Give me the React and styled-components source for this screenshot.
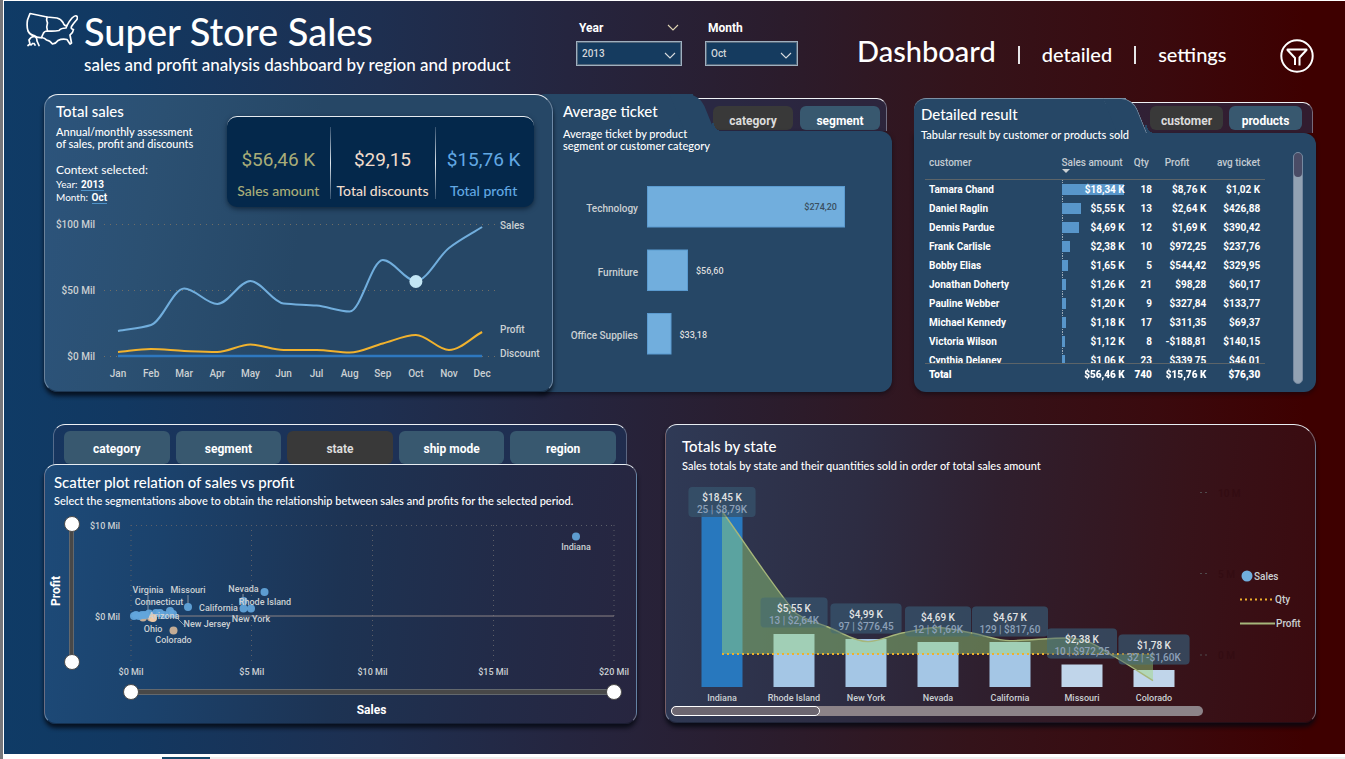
import React, { useState } from "react";
import styled, { createGlobalStyle, css } from "styled-components";

const human = `Lato, "Open Sans", sans-serif`;
const din = `Roboto, "Noto Sans", sans-serif`;
const panel = "#264766";
const sky = "#71aedd";

const GlobalStyle = createGlobalStyle`
  *, *::before, *::after { box-sizing: border-box; }
  body { margin: 0; font-family: ${din}; color: #fff; background: #fff; }
  h1, h2, p { margin: 0; font-weight: 500; }
  button { font: inherit; color: inherit; border: 0; padding: 0; cursor: pointer; }
  svg { display: block; }
`;

const Page = styled.div`
  min-height: 100vh;
  display: flex;
  flex-direction: column;
  border-left: 3px solid #77777b;
`;

const Report = styled.main`
  flex: 1;
  border-top: 1px solid #fff;
  border-left: 1px solid #fff;
  background: linear-gradient(90deg, #0f3b66 0%, #123861 9%, #1e2f50 28%, #25253f 42%, #2b1c2c 58%, #34131a 72%, #3a0a0e 86%, #3e0000 97%);
`;

const Header = styled.header`
  display: grid;
  grid-template-columns: 550fr 281fr 457fr;
  height: 93px;
  padding: 0 31px 0 22px;
`;

const Brand = styled.div`
  display: flex;
  gap: 6px;
  padding-top: 9px;
`;

const BrandText = styled.div`
  font-family: ${human};
`;

const AppTitle = styled.h1`
  font-size: 38px;
  line-height: 42px;
  white-space: nowrap;
`;

const AppSubtitle = styled.p`
  font-size: 17px;
  line-height: 26px;
  white-space: nowrap;
`;

const Filters = styled.div`
  display: flex;
  gap: 23px;
  padding-top: 18px;
`;

const FilterField = styled.div`
  position: relative;
  width: ${(p) => p.$width}px;
`;

const FilterLabel = styled.label`
  display: flex;
  justify-content: space-between;
  align-items: center;
  height: 18px;
  padding: 0 3px;
  margin-bottom: 4px;
  font-size: 12px;
  font-weight: 700;
`;

const FilterSelect = styled.select`
  appearance: none;
  display: block;
  width: 100%;
  height: 25px;
  padding: 0 5px;
  border: 1px solid #9fb0bf;
  outline: 1px solid #53677b;
  outline-offset: -2px;
  border-radius: 0;
  background: #153b5f;
  color: #d3d6d9;
  font-family: ${din};
  font-size: 10px;
  font-weight: 500;
`;

const SelectChevron = styled.svg`
  position: absolute;
  right: 6px;
  top: 33px;
  pointer-events: none;
`;

const Nav = styled.nav`
  display: flex;
  align-items: baseline;
  padding-top: 29px;
  font-family: ${human};
  font-weight: 500;
`;

const NavLink = styled.a`
  color: #fff;
  text-decoration: none;
  line-height: 42px;
  font-size: ${(p) => (p.$active ? 29 : 20)}px;
`;

const NavBar = styled.span`
  align-self: flex-start;
  width: 2px;
  height: 18px;
  margin: 16px 22px 0;
  background: #e6e6e8;
`;

const FilterButton = styled.button`
  align-self: flex-start;
  margin: 9px 0 0 auto;
  width: 34px;
  height: 34px;
  background: none;
`;

const Content = styled.div`
  padding: 0 29px 30px 40px;
`;

const Row = styled.section`
  display: grid;
  grid-template-columns: ${(p) => p.$cols};
  column-gap: ${(p) => p.$gap}px;
  align-items: start;
`;

const TopRow = styled(Row)`
  margin-bottom: 32px;
`;

const Pair = styled.div`
  display: grid;
  grid-template-columns: 509fr 339fr;
  min-height: 298px;
`;

const Card = styled.article`
  min-width: 0;
  border: 1px solid rgba(210, 220, 235, 0.4);
  border-top-color: #e8edf2;
  border-bottom-color: rgba(10, 16, 28, 0.4);
  border-radius: ${(p) => p.$radius || "12px"};
  background: ${(p) => p.$bg};
  box-shadow: 0 4px 4px rgba(4, 8, 16, 0.8);
`;

const SalesCard = styled(Card)`
  position: relative;
  z-index: 2;
`;

const CardTitle = styled.h2`
  font-family: ${human};
  font-size: 15px;
  line-height: 20px;
  white-space: nowrap;
`;

const CardText = styled.p`
  font-family: ${human};
  font-size: 11px;
  line-height: 12px;
  white-space: nowrap;
  margin-top: ${(p) => p.$top || 0}px;
`;

const SalesHead = styled.div`
  display: flex;
  justify-content: space-between;
  height: 115px;
  padding: 6px 18px 0 11px;
`;

const Intro = styled.div`
  display: flex;
  flex-direction: column;
`;

const Context = styled.div`
  margin-top: 12px;
  font-family: ${human};
  font-size: 12px;
  line-height: 16px;
`;

const ContextLine = styled.div`
  font-size: 10px;
  line-height: 12px;
  b {
    font-family: ${din};
    font-weight: 700;
    border-bottom: 1px solid #4f93c9;
    margin-left: 1px;
  }
`;

const Kpis = styled.div`
  display: grid;
  grid-template-columns: 103fr 106fr 97fr;
  width: 307px;
  height: 91px;
  margin-top: 15px;
  padding-right: 2px;
  border-top: 1px solid #e6ebf0;
  border-radius: 10px;
  background: #04284b;
  box-shadow: 0 2px 5px rgba(4, 16, 32, 0.6);
`;

const Kpi = styled.div`
  position: relative;
  display: flex;
  flex-direction: column;
  align-items: center;
  padding-top: 31px;
  color: ${(p) => p.$color};
  &:not(:first-child)::before {
    content: "";
    position: absolute;
    left: 0;
    top: 10px;
    height: 72px;
    width: 1px;
    background: linear-gradient(#33506e, #dfe6ec, #33506e);
  }
`;

const KpiValue = styled.strong`
  font-weight: 400;
  font-size: 19px;
  line-height: 24px;
`;

const KpiLabel = styled.span`
  font-family: ${human};
  font-weight: 500;
  font-size: 14px;
  line-height: 18px;
  margin-top: 10px;
  white-space: nowrap;
`;

const Chart = styled.svg`
  width: 100%;
  height: auto;
  font-family: ${din};
  font-size: 10px;
  font-weight: 500;
  fill: #cbd0d3;
`;

const Folder = styled.article`
  display: flex;
  flex-direction: column;
  min-width: 0;
  margin-top: ${(p) => p.$drop || 0}px;
  margin-left: ${(p) => p.$tuck || 0}px;
`;

const FolderHead = styled.div`
  display: flex;
  height: ${(p) => p.$height}px;
`;

const FolderTab = styled.div`
  position: relative;
  z-index: 1;
  flex: none;
  width: ${(p) => p.$width}px;
  height: 100%;
  padding: ${(p) => p.$pad};
  border-radius: 12px 0 0 0;
  background: ${panel};
  ${(p) => p.$line && css`border-top: 1px solid #7c90a4;`}
  &::after {
    content: "";
    position: absolute;
    z-index: -1;
    top: ${(p) => (p.$line ? -1 : 0)}px;
    right: -14px;
    width: 30px;
    height: 100%;
    border-radius: 0 12px 0 0;
    background: ${panel};
    ${(p) => p.$line && css`border-top: 1px solid #7c90a4; border-right: 1px solid #7c90a4; height: calc(100% + 1px);`}
    transform: skewX(22deg);
  }
  &::before {
    content: "";
    position: absolute;
    z-index: -1;
    right: -29px;
    bottom: 0;
    width: 10px;
    height: 8px;
    background: radial-gradient(circle at 10px 0, transparent 8px, ${panel} 8px);
  }
`;

const TabStrip = styled.div`
  flex: 1;
  display: flex;
  justify-content: flex-end;
  gap: ${(p) => p.$gap}px;
  margin: 4px ${(p) => p.$inset}px 0 0;
  padding: ${(p) => p.$pad};
  border: 1px solid rgba(220, 225, 235, 0.4);
  border-top-color: #f0f2f5;
  border-left: 0;
  border-bottom: 0;
  border-radius: 0 10px 0 0;
  background: rgba(44, 46, 78, 0.6);
`;

const TabButton = styled.button`
  && {
    height: ${(p) => p.$height || 24}px;
    width: ${(p) => p.$width || "auto"};
    border-radius: 6px;
    background: ${(p) => (p.$active ? "#393939" : "#38586f")};
    color: ${(p) => (p.$active ? "#dcdcdc" : "#fff")};
    font-size: 12px;
    font-weight: 700;
    padding-top: ${(p) => (p.$height ? 2 : 5)}px;
  }
`;

const FolderBody = styled.div`
  flex: 1;
  padding: ${(p) => p.$pad || 0};
  border-radius: 0 12px 12px 12px;
  background: ${panel};
  box-shadow: 0 2px 4px rgba(4, 8, 16, 0.5);
`;

const TableArea = styled.div`
  display: flex;
  justify-content: space-between;
  height: 232px;
`;

const TableClip = styled.div`
  width: 90%;
  overflow: hidden;
`;

const DataTable = styled.table`
  width: 100%;
  table-layout: fixed;
  border-collapse: separate;
  border-spacing: 0;
  font-size: 10px;
  font-weight: 700;
  th, td { padding: 0 1px 0 4px; text-align: right; white-space: nowrap; }
  td { height: 19px; position: relative; }
  th:first-child, td:first-child { text-align: left; }
  th:last-child, td:last-child { padding-right: 5px; }
  thead th {
    height: 28px;
    padding-bottom: 6px;
    font-weight: 500;
    color: #c3cbd2;
    border-bottom: 1px solid #5c6468;
  }
  thead th:nth-child(2) { padding: 0 3px 6px 0; }
  thead th:nth-child(4) { padding: 0 18px 6px 0; }
  thead th:nth-child(3) { padding: 0 4px 6px 0; }
  tfoot td {
    position: sticky;
    bottom: 0;
    height: 21px;
    background: ${panel};
    border-top: 1px solid #5c6468;
    font-weight: 900;
  }
`;

const SortMark = styled.span`
  position: absolute;
  left: 1px;
  top: 17px;
  border: 4px solid transparent;
  border-top: 4px solid #cbd0d3;
  border-bottom: 0;
`;

const HeadCell = styled.th`
  position: relative;
`;

const BarCell = styled.td`
  &::before {
    content: "";
    position: absolute;
    left: 1px;
    top: 0;
    bottom: 0;
    border-left: 1px dotted #9cabb8;
  }
`;

const BarFill = styled.span`
  position: absolute;
  left: 1px;
  top: 4px;
  height: 11px;
  background: #5896ca;
`;

const BarText = styled.span`
  position: relative;
`;

const VScroll = styled.div`
  width: 10px;
  height: 100%;
  border: 1px solid #7689a0;
  border-radius: 5px;
  background: #92a2b3;
`;

const VThumb = styled.div`
  height: 24px;
  border-radius: 4px;
  background: #4a4c66;
`;

const ScatterTabs = styled.div`
  display: grid;
  grid-template-columns: repeat(5, 1fr);
  gap: 6px;
  height: 40px;
  margin: 0 10px 0 9px;
  padding: 6px 10px 0;
  border: 1px solid rgba(200, 210, 225, 0.35);
  border-top-color: #eef1f5;
  border-bottom: 0;
  border-radius: 12px 12px 0 0;
  background: rgba(28, 52, 92, 0.6);
`;

const ScatterHead = styled.div`
  padding: 7px 9px 9px;
`;

const ScatterGrid = styled.div`
  display: grid;
  grid-template-columns: 19px 21px 1fr;
`;

const YTitle = styled.div`
  writing-mode: vertical-rl;
  transform: rotate(180deg);
  text-align: center;
  font-size: 12px;
  font-weight: 700;
  padding: 16px 4px 0 0;
`;

const YSliderCell = styled.div`
  padding-bottom: 12px;
`;

const XSliderCell = styled.div`
  grid-column: 3;
  padding: 2px 14px 0 38px;
`;

const XTitle = styled.div`
  grid-column: 3;
  text-align: center;
  font-size: 12px;
  font-weight: 700;
  line-height: 18px;
  padding: 1px 0 4px 22px;
`;

const RangeBox = styled.div`
  position: relative;
  ${(p) => (p.$vertical ? css`width: 16px; height: 100%;` : css`height: 16px; width: 100%;`)}
  &::before {
    content: "";
    position: absolute;
    background: #484848;
    border: 1px solid #63686d;
    ${(p) => (p.$vertical ? css`left: 5px; width: 5px; top: 8px; bottom: 8px;` : css`top: 5px; height: 6px; left: 8px; right: 8px;`)}
  }
`;

const RangeInput = styled.input`
  appearance: none;
  position: absolute;
  inset: 0;
  width: 100%;
  height: 100%;
  margin: 0;
  background: transparent;
  pointer-events: none;
  ${(p) => p.$vertical && css`writing-mode: vertical-lr; direction: rtl;`}
  &::-webkit-slider-thumb {
    appearance: none;
    pointer-events: auto;
    width: 16px;
    height: 16px;
    border: 1px solid #4b4b4b;
    border-radius: 50%;
    background: #fff;
  }
`;

const TotalsHead = styled.div`
  padding: 11px 16px 8px;
`;

const HScroll = styled.div`
  width: 82%;
  height: 10px;
  margin: 0 0 6px 5px;
  border-radius: 5px;
  background: #8c8388;
`;

const HThumb = styled.div`
  width: 28%;
  height: 10px;
  border: 1px solid #fff;
  border-radius: 5px;
  background: #6c6670;
`;

const Footer = styled.footer`
  display: flex;
  height: 5px;
  background: #fff;
`;

const FooterTab = styled.span`
  margin: 3px 0 0 159px;
  width: 48px;
  background: #17496b;
`;

const FooterRest = styled.span`
  flex: 1;
  margin-top: 3px;
  background: #efefef;
`;

function smooth(pts) {
  const n = pts.length;
  const s = pts.slice(1).map(([x, y], i) => (y - pts[i][1]) / (x - pts[i][0]));
  const m = pts.map((_, i) => {
    if (i === 0) return s[0];
    if (i === n - 1) return s[n - 2];
    if (s[i - 1] * s[i] <= 0) return 0;
    return (2 * s[i - 1] * s[i]) / (s[i - 1] + s[i]);
  });
  let d = `M${pts[0][0]} ${pts[0][1]}`;
  for (let i = 1; i < n; i++) {
    const [x0, y0] = pts[i - 1];
    const [x1, y1] = pts[i];
    const h = (x1 - x0) / 3;
    d += `C${x0 + h} ${y0 + m[i - 1] * h} ${x1 - h} ${y1 - m[i] * h} ${x1} ${y1}`;
  }
  return d;
}

const months = ["Jan", "Feb", "Mar", "Apr", "May", "Jun", "Jul", "Aug", "Sep", "Oct", "Nov", "Dec"];
const mx = (i) => 74 + i * 33.1;
const salesY = [121, 115, 78.5, 94, 71, 93.5, 95.5, 101.5, 50, 71, 38, 17];
const profitY = [142, 139, 141, 142, 134.5, 140, 140, 142.5, 133.5, 125, 140, 122];

function SalesChart() {
  return (
    <Chart viewBox="1 0 507 180" role="img" aria-label="Sales, profit and discount by month">
      {[["$100 Mil", 14.5], ["$50 Mil", 80.5], ["$0 Mil", 146.5]].map(([t, y]) => (
        <g key={t}>
          <text x="51" y={y + 3.5} textAnchor="end">{t}</text>
          <path d={`M60 ${y}H452`} stroke="#6f6d66" strokeDasharray="1 5" fill="none" />
        </g>
      ))}
      {months.map((t, i) => (
        <text key={t} x={mx(i)} y="167" textAnchor="middle">{t}</text>
      ))}
      <path d={`M${mx(0)} 146H${mx(11)}`} stroke="#2e78bf" strokeWidth="2.5" />
      <path d={smooth(profitY.map((y, i) => [mx(i), y]))} stroke="#f0b22e" strokeWidth="2" fill="none" />
      <path d={smooth(salesY.map((y, i) => [mx(i), y]))} stroke={sky} strokeWidth="2" fill="none" />
      <circle cx={mx(9)} cy="71.5" r="6.5" fill="#c3e6f5" />
      <text x="456" y="19">Sales</text>
      <text x="456" y="123">Profit</text>
      <text x="456" y="147">Discount</text>
    </Chart>
  );
}

const tickets = [
  { name: "Technology", value: "$274,20", w: 197, y: 16 },
  { name: "Furniture", value: "$56,60", w: 40, y: 79.5 },
  { name: "Office Supplies", value: "$33,18", w: 23.5, y: 143 },
];

function TicketChart() {
  return (
    <Chart viewBox="0 0 339 222" role="img" aria-label="Average ticket by category">
      {tickets.map((t, i) => (
        <g key={t.name}>
          <text x="85" y={t.y + 26} textAnchor="end">{t.name}</text>
          <rect x="94.5" y={t.y + 0.5} width={t.w} height="40.5" fill={sky} stroke="#5b9bd0" />
          {i === 0 ? (
            <text x="284" y={t.y + 24} textAnchor="end" fontSize="9" fill="#3a4f60">{t.value}</text>
          ) : (
            <text x={t.w + 103} y={t.y + 24.5} fontSize="9" fill="#dcdcdc">{t.value}</text>
          )}
        </g>
      ))}
    </Chart>
  );
}

const customers = [
  ["Tamara Chand", "$18,34 K", "18", "$8,76 K", "$1,02 K", 62],
  ["Daniel Raglin", "$5,55 K", "13", "$2,64 K", "$426,88", 19],
  ["Dennis Pardue", "$4,69 K", "12", "$1,69 K", "$390,42", 17],
  ["Frank Carlisle", "$2,38 K", "10", "$972,25", "$237,76", 8],
  ["Bobby Elias", "$1,65 K", "5", "$544,42", "$329,95", 6],
  ["Jonathan Doherty", "$1,26 K", "21", "$98,28", "$60,17", 4],
  ["Pauline Webber", "$1,20 K", "9", "$327,84", "$133,77", 4],
  ["Michael Kennedy", "$1,18 K", "17", "$311,35", "$69,37", 4],
  ["Victoria Wilson", "$1,12 K", "8", "-$188,81", "$140,15", 3],
  ["Cynthia Delaney", "$1,06 K", "23", "$339,75", "$46,01", 3],
];

const Col = styled.col`
  width: ${(p) => p.$w}%;
`;

function CustomerTable() {
  return (
    <DataTable>
      <colgroup>
        <Col $w={40} />
        <Col $w={19} />
        <Col $w={8} />
        <Col $w={16} />
        <Col $w={17} />
      </colgroup>
      <thead>
        <tr>
          <HeadCell>customer</HeadCell>
          <HeadCell>Sales amount<SortMark /></HeadCell>
          <HeadCell>Qty</HeadCell>
          <HeadCell>Profit</HeadCell>
          <HeadCell>avg ticket</HeadCell>
        </tr>
      </thead>
      <tbody>
        {customers.map(([name, amount, qty, profit, avg, bar]) => (
          <tr key={name}>
            <td>{name}</td>
            <BarCell>
              <BarFill style={{ width: `${bar}px` }} />
              <BarText>{amount}</BarText>
            </BarCell>
            <td>{qty}</td>
            <td>{profit}</td>
            <td>{avg}</td>
          </tr>
        ))}
      </tbody>
      <tfoot>
        <tr>
          <td>Total</td>
          <td>$56,46 K</td>
          <td>740</td>
          <td>$15,76 K</td>
          <td>$76,30</td>
        </tr>
      </tfoot>
    </DataTable>
  );
}

const dots = [
  [491, 20.5], [179.5, 76], [158.5, 85], [158.5, 92.5], [166, 92.5], [103, 91],
  [49, 100], [51, 99], [54, 100], [57, 99], [60, 99], [64, 97.5], [71, 97], [75, 97], [79, 99], [85, 95], [88, 98],
];
const warmDots = [[58, 101.5], [66, 101.5], [88.5, 114.5]];
const scatterLabels = [
  ["Indiana", 491, 34], ["Virginia", 63, 77], ["Missouri", 103, 77], ["Nevada", 158.5, 76],
  ["Connecticut", 74, 89], ["Rhode Island", 180, 89], ["California", 133.5, 95],
  ["Arizona", 79, 103], ["New York", 166, 106], ["New Jersey", 122, 111],
  ["Ohio", 68, 116], ["Colorado", 88.5, 127],
];

function ScatterChart() {
  return (
    <Chart viewBox="0 0 551 166" role="img" aria-label="Sales against profit by state">
      <g stroke="#5d5f68" strokeDasharray="1 4" fill="none">
        <path d="M46 9.5H529" />
        {[46, 166.5, 287.5, 408.5, 529].map((x) => <path key={x} d={`M${x} 9V148`} />)}
      </g>
      <path d="M46 100H529" stroke="#8b8385" />
      <text x="35" y="13" textAnchor="end" fontSize="9">$10 Mil</text>
      <text x="35" y="104" textAnchor="end" fontSize="9">$0 Mil</text>
      {["$0 Mil", "$5 Mil", "$10 Mil", "$15 Mil", "$20 Mil"].map((t, i) => (
        <text key={t} x={46 + i * 120.75} y="159" textAnchor="middle" fontSize="9">{t}</text>
      ))}
      <path d="M63 79V98M103 79V88M88 98L99 109M158 78V84" stroke="#8d97a3" />
      {warmDots.map(([x, y]) => <circle key={x} cx={x} cy={y} r="4" fill="#e2bf9d" fillOpacity="0.85" />)}
      {dots.map(([x, y]) => <circle key={`${x}-${y}`} cx={x} cy={y} r="4" fill="#63a6dc" fillOpacity="0.92" />)}
      <circle cx="68" cy="102" r="4" fill="#f0c9a4" />
      {scatterLabels.map(([t, x, y]) => (
        <text key={t} x={x} y={y} textAnchor="middle" fontSize="9">{t}</text>
      ))}
    </Chart>
  );
}

const states = [
  { name: "Indiana", a: "$18,45 K", b: "25 | $8,79K", top: 30, box: 8, w: 67 },
  { name: "Rhode Island", a: "$5,55 K", b: "13 | $2,64K", top: 154, box: 118.5, w: 67 },
  { name: "New York", a: "$4,99 K", b: "97 | $776,45", top: 159, box: 124.5, w: 71 },
  { name: "Nevada", a: "$4,69 K", b: "12 | $1,69K", top: 162, box: 127.5, w: 66 },
  { name: "California", a: "$4,67 K", b: "129 | $817,60", top: 162, box: 127.5, w: 76 },
  { name: "Missouri", a: "$2,38 K", b: "10 | $972,25", top: 184.5, box: 149.5, w: 70 },
  { name: "Colorado", a: "$1,78 K", b: "32 | -$1,60K", top: 190, box: 155.5, w: 71 },
];
const profitLine = smooth([[57, 31], [125, 126], [132, 134], [163, 147], [203, 161.6], [237, 153], [272, 147.5], [307, 153], [345, 160.6], [402, 158], [418, 160], [450, 177], [488, 200.6]]);

function StateChart() {
  return (
    <Chart viewBox="1 0 649 226" role="img" aria-label="Sales, quantity and profit by state">
      {states.map((s, i) => {
        const x = 57 + i * 72;
        return (
          <g key={s.name}>
            <rect x={x - 20.5} y={s.top} width="41" height={207 - s.top} fill={i === 0 ? "#2878be" : i > 4 ? "#c0d5ea" : "#a4c6e5"} />
            <text x={x} y="221" textAnchor="middle" fontSize="9">{s.name}</text>
          </g>
        );
      })}
      {states.map((s, i) => (
        <rect key={s.name} x={57 + i * 72 - s.w / 2} y={s.box - 1} width={s.w} height="30" rx="4" fill="#3a5770" fillOpacity="0.62" />
      ))}
      <path d={`${profitLine}V174H57Z`} fill="#9ddb7c" fillOpacity="0.44" />
      <path d="M57 174H488" stroke="#efb02c" strokeWidth="2" strokeDasharray="2 3" />
      <path d={profitLine} fill="none" stroke="#a6b67b" strokeWidth="1.4" />
      {states.map((s, i) => {
        const x = 57 + i * 72;
        return (
          <g key={s.name}>
            <rect x={x - s.w / 2} y={s.box - 1} width={s.w} height="30" rx="4" fill="#34506a" fillOpacity="0.4" />
            <text x={x} y={s.box + 13} textAnchor="middle" fill="#e2e4e4">{s.a}</text>
            <text x={x} y={s.box + 25} textAnchor="middle" fill="#8ca0b8">{s.b}</text>
          </g>
        );
      })}
      {[["10 M", 12.5], ["5 M", 93.5], ["0 M", 175]].map(([t, y]) => (
        <g key={t}>
          <path d={`M535 ${y}H543`} stroke="#4f4a4c" strokeDasharray="2 3" />
          <text x="553" y={y + 4} fill="#330c12">{t}</text>
        </g>
      ))}
      <circle cx="582" cy="96" r="5.5" fill={sky} />
      <text x="589" y="99.5">Sales</text>
      <path d="M575 119.5H610" stroke="#efb02c" strokeWidth="2" strokeDasharray="2 3" />
      <text x="610" y="122.5">Qty</text>
      <path d="M575 143.5H610" stroke="#a6b67b" strokeWidth="2" />
      <text x="611" y="147">Profit</text>
    </Chart>
  );
}

function Logo() {
  return (
    <svg width="52" height="38" viewBox="26 13 52 36" fill="none" stroke="#fff" strokeWidth="1.7" strokeLinejoin="round" strokeLinecap="round" aria-hidden="true">
      <path d="M30 15.500L47 19L57 20Q61 21 63 24.500Q64.500 28.500 67 27.500Q68.500 24 72 20Q75 17 76.500 18Q78.500 19.500 76.500 22Q73 26 71.500 28.500Q70.500 31 73.500 31.500Q73 35 70 37L71.500 45L70 46L67 41.500Q62 40.500 58 42.500Q56 45.500 52.500 46Q50 42.500 46.500 42Q45 40 41.500 39.500Q37 40 34 37.500Q30 37 28 33Q26.500 28 27.500 22Z" />
      <path d="M47 19Q46 22 47.500 25Q46 29 47.500 33Q44 33 43 36L41.500 39.500M47.500 33Q54 33.500 59 32.500Q61 30 66 30L67 27.500" />
      <path d="M28 47.500L30 46L29 42Q31 38.500 34 38.500Q37 39 37 43L39 47.500M31 47L32.500 45.500M35 47L34 45.500" />
    </svg>
  );
}

function Chevron({ color = "#d9dcdf" }) {
  return <path d="M1 1L6 6L11 1" fill="none" stroke={color} strokeWidth="1.1" />;
}

function Filter({ id, label, width, value, options, corner }) {
  return (
    <FilterField $width={width}>
      <FilterLabel htmlFor={id}>
        {label}
        {corner && <svg width="12" height="8"><Chevron color="#e0d6b4" /></svg>}
      </FilterLabel>
      <FilterSelect id={id} defaultValue={value}>
        {options.map((o) => <option key={o}>{o}</option>)}
      </FilterSelect>
      <SelectChevron width="12" height="8"><Chevron /></SelectChevron>
    </FilterField>
  );
}

function DoubleRange({ label, vertical }) {
  return (
    <RangeBox $vertical={vertical}>
      <RangeInput type="range" aria-label={`${label} from`} defaultValue="0" $vertical={vertical} />
      <RangeInput type="range" aria-label={`${label} to`} defaultValue="100" $vertical={vertical} />
    </RangeBox>
  );
}

export default function App() {
  const [ticket, setTicket] = useState("category");
  const [detail, setDetail] = useState("customer");
  const [segment, setSegment] = useState("state");
  return (
    <Page>
      <GlobalStyle />
      <Report>
        <Header>
          <Brand>
            <Logo />
            <BrandText>
              <AppTitle>Super Store Sales</AppTitle>
              <AppSubtitle>sales and profit analysis dashboard by region and product</AppSubtitle>
            </BrandText>
          </Brand>
          <Filters>
            <Filter id="year" label="Year" width={106} value="2013" options={["2011", "2012", "2013", "2014"]} corner />
            <Filter id="month" label="Month" width={93} value="Oct" options={months} />
          </Filters>
          <Nav>
            <NavLink href="#dashboard" $active>Dashboard</NavLink>
            <NavBar />
            <NavLink href="#detailed">detailed</NavLink>
            <NavBar />
            <NavLink href="#settings">settings</NavLink>
            <FilterButton aria-label="Filters">
              <svg width="34" height="34" viewBox="0 0 34 34" fill="none" stroke="#fff" strokeWidth="2">
                <circle cx="17" cy="17" r="15.700" />
                <path d="M15 26V19L7.500 11V10.500H26.500V11L19.500 18.500V26.500" strokeLinejoin="round" />
              </svg>
            </FilterButton>
          </Nav>
        </Header>

        <Content>
          <TopRow $cols="848fr 402fr" $gap={22}>
            <Pair>
              <SalesCard $bg="linear-gradient(100deg, #2c547c 0%, #2b5072 22%, #264766 50%, #264766 100%)" $radius="14px 18px 12px 14px">
                <SalesHead>
                  <Intro>
                    <CardTitle>Total sales</CardTitle>
                    <CardText $top={5}>Annual/monthly assessment<br />of sales, profit and discounts</CardText>
                    <Context>
                      Context selected:
                      <ContextLine>Year: <b>2013</b></ContextLine>
                      <ContextLine>Month: <b>Oct</b></ContextLine>
                    </Context>
                  </Intro>
                  <Kpis>
                    <Kpi $color="#a9ad78"><KpiValue>$56,46 K</KpiValue><KpiLabel>Sales amount</KpiLabel></Kpi>
                    <Kpi $color="#f0dccb"><KpiValue>$29,15</KpiValue><KpiLabel>Total discounts</KpiLabel></Kpi>
                    <Kpi $color="#62a8e4"><KpiValue>$15,76 K</KpiValue><KpiLabel>Total profit</KpiLabel></Kpi>
                  </Kpis>
                </SalesHead>
                <SalesChart />
              </SalesCard>

              <Folder $tuck={-20}>
                <FolderHead $height={37}>
                  <FolderTab $width={160} $pad="7px 0 0 30px">
                    <CardTitle>Average ticket</CardTitle>
                    <CardText $top={7}>Average ticket by product<br />segment or customer category</CardText>
                  </FolderTab>
                  <TabStrip $inset={5} $gap={7} $pad="7px 6px 0 0">
                    {["category", "segment"].map((t) => (
                      <TabButton key={t} $width="80px" $active={t === ticket} onClick={() => setTicket(t)}>{t}</TabButton>
                    ))}
                  </TabStrip>
                </FolderHead>
                <FolderBody $pad="39px 0 0 20px">
                  <TicketChart />
                </FolderBody>
              </Folder>
            </Pair>

            <Folder $drop={4}>
              <FolderHead $height={35}>
                <FolderTab $width={212} $pad="5px 0 0 7px" $line>
                  <CardTitle>Detailed result</CardTitle>
                  <CardText $top={5}>Tabular result by customer or products sold</CardText>
                </FolderTab>
                <TabStrip $inset={3} $gap={6} $pad="3px 10px 0 0">
                  {["customer", "products"].map((t) => (
                    <TabButton key={t} $width="73px" $active={t === detail} onClick={() => setDetail(t)}>{t}</TabButton>
                  ))}
                </TabStrip>
              </FolderHead>
              <FolderBody $pad="19px 13px 8px 11px">
                <TableArea>
                  <TableClip><CustomerTable /></TableClip>
                  <VScroll><VThumb /></VScroll>
                </TableArea>
              </FolderBody>
            </Folder>
          </TopRow>

          <Row $cols="593fr 651fr" $gap={28}>
            <div>
              <ScatterTabs>
                {["category", "segment", "state", "ship mode", "region"].map((t) => (
                  <TabButton key={t} $height={33} $active={t === segment} onClick={() => setSegment(t)}>{t}</TabButton>
                ))}
              </ScatterTabs>
              <Card $bg="linear-gradient(95deg, #1d4a78 0%, #1b426c 20%, #1d3353 50%, #222b48 75%, #27253f 100%)">
                <ScatterHead>
                  <CardTitle>Scatter plot relation of sales vs profit</CardTitle>
                  <CardText $top={3}>Select the segmentations above to obtain the relationship between sales and profits for the selected period.</CardText>
                </ScatterHead>
                <ScatterGrid>
                  <YTitle>Profit</YTitle>
                  <YSliderCell><DoubleRange label="Profit" vertical /></YSliderCell>
                  <ScatterChart />
                  <XSliderCell><DoubleRange label="Sales" /></XSliderCell>
                  <XTitle>Sales</XTitle>
                </ScatterGrid>
              </Card>
            </div>

            <Card $bg="linear-gradient(95deg, #2f3a56 0%, #2d2c42 30%, #2f1f2e 50%, #37131a 78%, #3b0a0e 100%)" $radius="12px 22px 12px 12px">
              <TotalsHead>
                <CardTitle>Totals by state</CardTitle>
                <CardText $top={4}>Sales totals by state and their quantities sold in order of total sales amount</CardText>
              </TotalsHead>
              <StateChart />
              <HScroll><HThumb /></HScroll>
            </Card>
          </Row>
        </Content>
      </Report>
      <Footer><FooterTab /><FooterRest /></Footer>
    </Page>
  );
}
